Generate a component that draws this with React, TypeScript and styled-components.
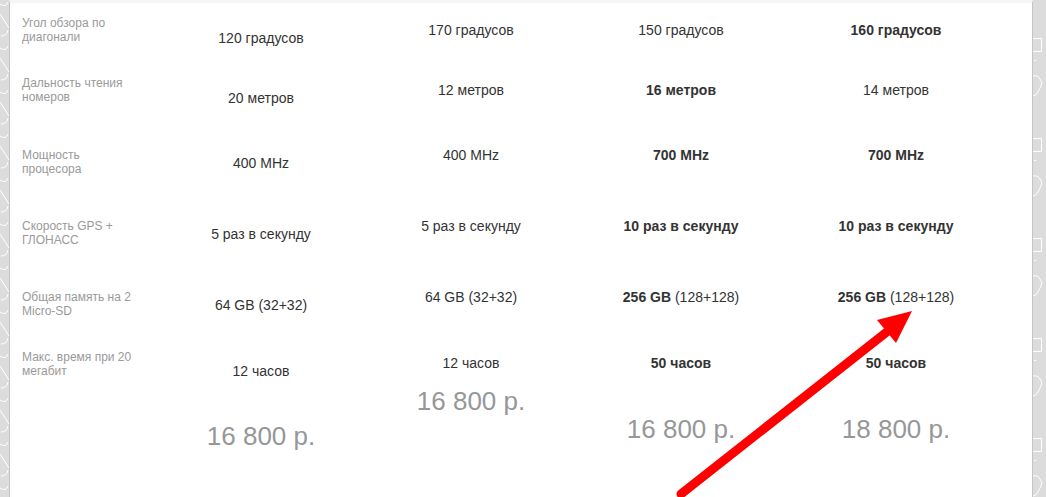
import React from "react";
import styled, { createGlobalStyle } from "styled-components";

const GlobalStyle = createGlobalStyle`
  html, body {
    margin: 0;
    padding: 0;
    background: #dcdcdc;
  }
  body {
    font-family: "Liberation Sans", Arial, sans-serif;
  }
`;

type Row = {
  label: string[];
  labelTop: number;
  valueTop: number;
  height: number;
  values: React.ReactNode[];
};

const rows: Row[] = [
  {
    label: ["Угол обзора по", "диагонали"],
    labelTop: 2,
    valueTop: 7,
    height: 60,
    values: ["120 градусов", "170 градусов", "150 градусов", <b key="b">160 градусов</b>],
  },
  {
    label: ["Дальность чтения", "номеров"],
    labelTop: 2,
    valueTop: 7,
    height: 66,
    values: ["20 метров", "12 метров", <b key="b">16 метров</b>, "14 метров"],
  },
  {
    label: ["Мощность", "процесора"],
    labelTop: 8,
    valueTop: 6,
    height: 71,
    values: ["400 MHz", "400 MHz", <b key="b">700 MHz</b>, <b key="c">700 MHz</b>],
  },
  {
    label: ["Скорость GPS +", "ГЛОНАСС"],
    labelTop: 8,
    valueTop: 6,
    height: 71,
    values: [
      "5 раз в секунду",
      "5 раз в секунду",
      <b key="b">10 раз в секунду</b>,
      <b key="c">10 раз в секунду</b>,
    ],
  },
  {
    label: ["Общая память на 2", "Micro-SD"],
    labelTop: 8,
    valueTop: 6,
    height: 66,
    values: [
      "64 GB (32+32)",
      "64 GB (32+32)",
      <><b>256 GB</b> (128+128)</>,
      <><b>256 GB</b> (128+128)</>,
    ],
  },
  {
    label: ["Макс. время при 20", "мегабит"],
    labelTop: 2,
    valueTop: 6,
    height: 32,
    values: ["12 часов", "12 часов", <b key="b">50 часов</b>, <b key="c">50 часов</b>],
  },
];

const prices = [
  { text: "16 800 р.", top: 40 },
  { text: "16 800 р.", top: 5 },
  { text: "16 800 р.", top: 33 },
  { text: "18 800 р.", top: 33 },
];

// first product column sits a little lower than the others
const FIRST_COL_DROP = 8;

export default function App() {
  return (
    <Page>
      <GlobalStyle />
      <Strip>
        <svg width="9" height="497">
          <defs>
            <pattern id="lp" width="9" height="44" patternUnits="userSpaceOnUse">
              <path d="M0 4 Q6 8 8 2" stroke="#fff" strokeWidth="1" fill="none" />
              <path d="M0 14 L9 28" stroke="#fff" strokeWidth="1" fill="none" />
              <path d="M8 30 Q7 36 1 36" stroke="#fff" strokeWidth="1" fill="none" />
            </pattern>
          </defs>
          <rect width="9" height="497" fill="url(#lp)" />
        </svg>
      </Strip>
      <Panel>
        {rows.map((r, i) => (
          <TableRow key={i} $height={r.height}>
            <Label $top={r.labelTop}>
              {r.label[0]}
              <br />
              {r.label[1]}
            </Label>
            {r.values.map((v, j) => (
              <Value key={j} $top={r.valueTop + (j === 0 ? FIRST_COL_DROP : 0)}>
                {v}
              </Value>
            ))}
          </TableRow>
        ))}
        <TableRow $height={117}>
          <Label $top={0} />
          {prices.map((p, j) => (
            <Price key={j} $top={p.top}>
              {p.text}
            </Price>
          ))}
        </TableRow>
      </Panel>
      <Strip $right>
        <svg width="13" height="497">
          <defs>
            <pattern id="rp" width="13" height="100" patternUnits="userSpaceOnUse" y="0">
              <path d="M0 38.5 H8.5 V51.5 H0" stroke="#fff" strokeWidth="1" fill="none" />
              <rect x="1" y="60" width="2" height="1" fill="#fff" />
              <path
                d="M0 76 Q5 75 7 79 Q10 82 8 86 Q6 90 5 92 Q3 96 0 96"
                stroke="#fff"
                strokeWidth="1"
                fill="none"
              />
            </pattern>
          </defs>
          <rect width="13" height="497" fill="url(#rp)" />
        </svg>
      </Strip>
      <Arrow width="1046" height="497" viewBox="0 0 1046 497">
        <path d="M681 494 L888 331" stroke="#ff0000" strokeWidth="9" strokeLinecap="round" fill="none" />
        <polygon points="912,311 877,320 896,343" fill="#ff0000" />
      </Arrow>
    </Page>
  );
}

const Page = styled.div`
  position: relative;
  display: flex;
  width: 1046px;
  height: 497px;
  overflow: hidden;
  background: #dcdcdc;
`;

const Strip = styled.div<{ $right?: boolean }>`
  flex: ${(p) => (p.$right ? "1" : "0 0 9px")};
  display: flex;
  svg {
    display: block;
  }
`;

const Panel = styled.div`
  flex: 0 0 1022px;
  background: #fff;
  border-left: 1px solid #c4c4c4;
  border-right: 1px solid #c4c4c4;
  border-top: 3px solid #f6f6f6;
  padding-top: 11px;
  display: flex;
  flex-direction: column;
`;

const TableRow = styled.div<{ $height: number }>`
  display: grid;
  grid-template-columns: 146px 210px 210px 210px 220px;
  height: ${(p) => p.$height}px;
  flex-shrink: 0;
`;

const Label = styled.div<{ $top: number }>`
  padding: ${(p) => p.$top}px 0 0 12px;
  font-size: 12px;
  line-height: 14px;
  color: #9a9a9a;
`;

const Value = styled.div<{ $top: number }>`
  padding-top: ${(p) => p.$top}px;
  text-align: center;
  font-size: 14px;
  line-height: 18px;
  color: #333;
  white-space: nowrap;

  b {
    font-weight: bold;
  }
`;

const Price = styled.div<{ $top: number }>`
  padding-top: ${(p) => p.$top}px;
  text-align: center;
  font-size: 26px;
  line-height: 32px;
  color: #959799;
  white-space: nowrap;
`;

const Arrow = styled.svg`
  position: absolute;
  left: 0;
  top: 0;
  pointer-events: none;
`;
